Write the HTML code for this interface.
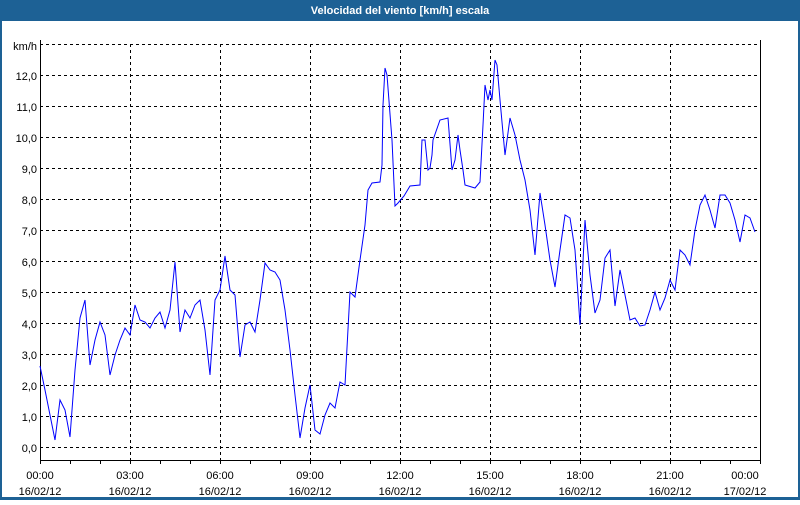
<!DOCTYPE html>
<html><head><meta charset="utf-8"><style>
html,body{margin:0;padding:0;background:#fff;}
body{width:800px;height:500px;overflow:hidden;font-family:"Liberation Sans",sans-serif;}
</style></head><body>
<svg width="800" height="500" xmlns="http://www.w3.org/2000/svg" font-family="Liberation Sans, sans-serif" font-size="11">
<rect x="0" y="0" width="800" height="500" fill="#fff"/>
<rect x="0" y="0" width="800" height="21" fill="#1d6195"/>
<rect x="0" y="0" width="2" height="500" fill="#1d6195"/>
<rect x="798" y="0" width="2" height="500" fill="#1d6195"/>
<rect x="0" y="497" width="800" height="3" fill="#1d6195"/>
<text x="400" y="14" fill="#fff" font-weight="bold" text-anchor="middle">Velocidad del viento [km/h] escala</text>
<g stroke="#000" stroke-width="1" stroke-dasharray="3,3" fill="none">
<line x1="40" y1="44.5" x2="760" y2="44.5"/>
<line x1="40" y1="75.5" x2="760" y2="75.5"/>
<line x1="40" y1="106.5" x2="760" y2="106.5"/>
<line x1="40" y1="137.5" x2="760" y2="137.5"/>
<line x1="40" y1="168.5" x2="760" y2="168.5"/>
<line x1="40" y1="199.5" x2="760" y2="199.5"/>
<line x1="40" y1="230.5" x2="760" y2="230.5"/>
<line x1="40" y1="261.5" x2="760" y2="261.5"/>
<line x1="40" y1="292.5" x2="760" y2="292.5"/>
<line x1="40" y1="323.5" x2="760" y2="323.5"/>
<line x1="40" y1="354.5" x2="760" y2="354.5"/>
<line x1="40" y1="385.5" x2="760" y2="385.5"/>
<line x1="40" y1="416.5" x2="760" y2="416.5"/>
<line x1="40" y1="447.5" x2="760" y2="447.5"/>
<line x1="130.5" y1="44" x2="130.5" y2="460"/>
<line x1="220.5" y1="44" x2="220.5" y2="460"/>
<line x1="310.5" y1="44" x2="310.5" y2="460"/>
<line x1="400.5" y1="44" x2="400.5" y2="460"/>
<line x1="490.5" y1="44" x2="490.5" y2="460"/>
<line x1="580.5" y1="44" x2="580.5" y2="460"/>
<line x1="670.5" y1="44" x2="670.5" y2="460"/>
</g>
<g stroke="#000" stroke-width="1" fill="none">
<line x1="40.5" y1="40" x2="40.5" y2="460.5"/>
<line x1="760.5" y1="40" x2="760.5" y2="460.5"/>
<line x1="40" y1="460.5" x2="761" y2="460.5"/>
<path d="M40.5 460v4M70.5 460v4M100.5 460v4M130.5 460v4M160.5 460v4M190.5 460v4M220.5 460v4M250.5 460v4M280.5 460v4M310.5 460v4M340.5 460v4M370.5 460v4M400.5 460v4M430.5 460v4M460.5 460v4M490.5 460v4M520.5 460v4M550.5 460v4M580.5 460v4M610.5 460v4M640.5 460v4M670.5 460v4M700.5 460v4M730.5 460v4M760.5 460v4"/>
</g>
<g fill="#000" text-anchor="end">
<text x="37" y="50">km/h</text>
<text x="37" y="80">12,0</text>
<text x="37" y="111">11,0</text>
<text x="37" y="142">10,0</text>
<text x="37" y="173">9,0</text>
<text x="37" y="204">8,0</text>
<text x="37" y="235">7,0</text>
<text x="37" y="266">6,0</text>
<text x="37" y="297">5,0</text>
<text x="37" y="328">4,0</text>
<text x="37" y="359">3,0</text>
<text x="37" y="390">2,0</text>
<text x="37" y="421">1,0</text>
<text x="37" y="452">0,0</text>
</g>
<g fill="#000" text-anchor="middle">
<text x="40" y="479">00:00</text><text x="40" y="495">16/02/12</text>
<text x="130" y="479">03:00</text><text x="130" y="495">16/02/12</text>
<text x="220" y="479">06:00</text><text x="220" y="495">16/02/12</text>
<text x="310" y="479">09:00</text><text x="310" y="495">16/02/12</text>
<text x="400" y="479">12:00</text><text x="400" y="495">16/02/12</text>
<text x="490" y="479">15:00</text><text x="490" y="495">16/02/12</text>
<text x="580" y="479">18:00</text><text x="580" y="495">16/02/12</text>
<text x="670" y="479">21:00</text><text x="670" y="495">16/02/12</text>
<text x="745" y="479">00:00</text><text x="745" y="495">17/02/12</text>
</g>
<polyline fill="none" stroke="#0000ff" stroke-width="1" points="40,366 45,390 50,415 55,440 60,400 65,410 70,437 75,370 80,318 85,300 90,365 95,340 100,322 105,335 110,375 115,355 120,340 125,328 130,335 135,305 140,320 145,322 150,328 155,318 160,312 165,328 170,310 175,262 180,332 185,310 190,318 195,305 200,300 205,330 210,375 215,300 220,290 225,256 230,290 235,295 240,357 245,325 250,322 255,332 260,300 265,263 270,270 275,272 280,280 285,310 290,350 295,395 300,438 305,408 310,385 315,430 320,434 325,415 330,403 335,408 340,382 345,385 350,292 355,297 360,260 365,225 368,190 372,183 380,182 382,165 383,105 385,68 387,75 392,140 395,206 398,203 404,196 410,186 420,185 422,140 425,140 428,170 430,168 432,155 433,140 440,120 448,118 452,170 455,160 458,135 460,150 463,170 465,185 475,188 480,182 483,125 485,85 488,100 490,90 492,100 495,60 497,65 500,100 505,155 510,118 515,135 520,160 525,180 530,210 535,255 540,193 545,225 550,260 555,287 560,250 565,215 570,218 575,250 580,325 585,220 590,275 595,313 600,300 605,258 610,250 615,306 620,270 625,295 630,320 635,318 640,326 645,325 650,310 655,292 660,310 665,298 670,280 675,290 680,250 685,255 690,265 695,230 700,205 705,195 710,210 715,228 720,195 725,195 730,203 735,220 740,242 745,215 750,218 755,232"/>
</svg>
</body></html>
